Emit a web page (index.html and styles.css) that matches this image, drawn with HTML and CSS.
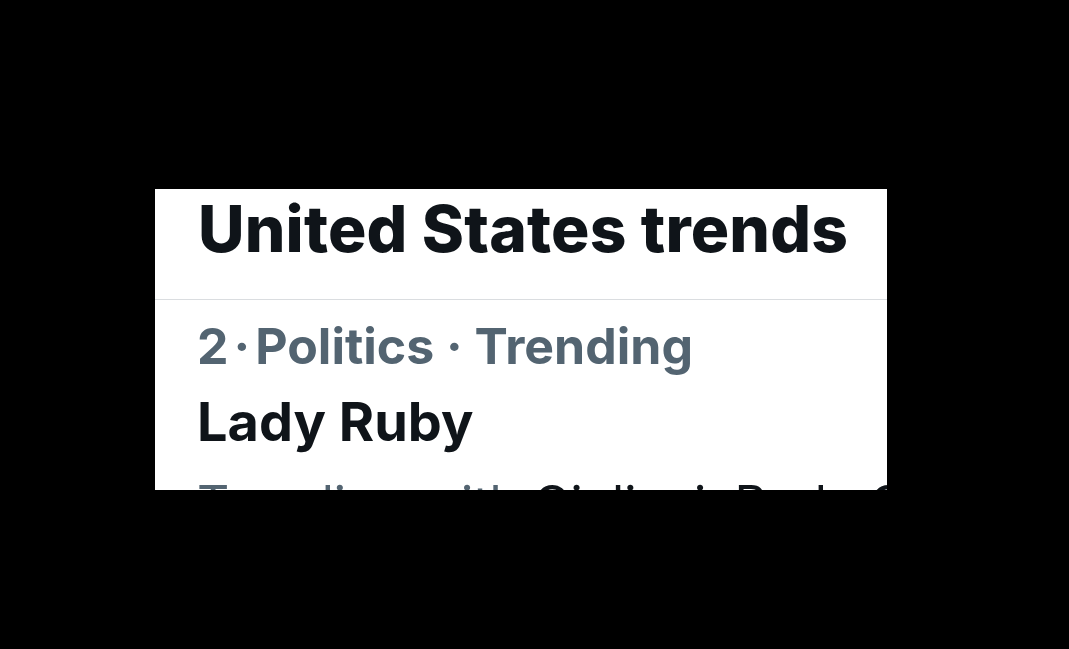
FILE: index.html
```html
<!DOCTYPE html>
<html lang="en">
<head>
<meta charset="utf-8">
<title>United States trends</title>
<link rel="stylesheet" href="styles.css">
</head>
<body>
<div class="stage">
  <section class="panel">
    <header class="panel-head">
      <h1 class="panel-title">United States trends</h1>
    </header>
    <div class="trend">
      <div class="trend-meta"><span class="rank">2</span><span class="dot-tight">·</span><span>Politics · Trending</span></div>
      <div class="trend-name">Lady Ruby</div>
      <div class="trend-with"><span class="muted">Trending with</span> Giuliani, Rudy Giuliani</div>
    </div>
  </section>
</div>
</body>
</html>
```

FILE: styles.css
```css
html, body {
  margin: 0;
  padding: 0;
  background: #000;
}

.stage {
  width: 1069px;
  height: 649px;
  padding: 189px 0 0 155px;
  box-sizing: border-box;
}

.panel {
  width: 732px;
  height: 301px;
  background: #fff;
  overflow: hidden;
  font-family: Inter, "Liberation Sans", sans-serif;
  color: #0f1419;
}

.panel-head {
  height: 111px;
  box-sizing: border-box;
  border-bottom: 1px solid #dadde0;
  padding: 0 0 0 43px;
}

.panel-title {
  margin: 0;
  font-size: 64px;
  font-weight: 800;
  line-height: 80px;
  letter-spacing: 0.2px;
  white-space: nowrap;
}

.trend {
  padding: 16px 0 0 42px;
  white-space: nowrap;
}

.trend-meta {
  color: #536471;
  font-size: 50px;
  font-weight: 700;
  line-height: 60px;
}

.dot-tight {
  margin: 0 5px;
}

.trend-name {
  margin-top: 11px;
  font-size: 54px;
  font-weight: 700;
  line-height: 70px;
}

.trend-with {
  margin-top: 17px;
  font-size: 50px;
  font-weight: 400;
  line-height: 60px;
}

.muted {
  color: #536471;
}
```
